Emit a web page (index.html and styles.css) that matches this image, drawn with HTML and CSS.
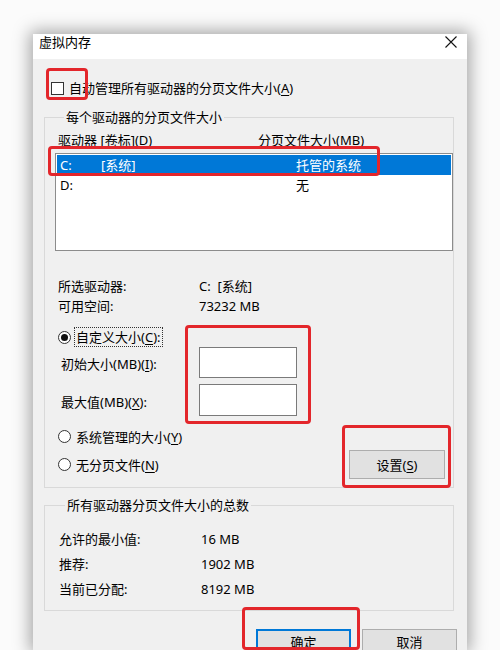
FILE: index.html
```html
<!DOCTYPE html>
<html lang="zh-CN">
<head>
<meta charset="utf-8">
<title>虚拟内存</title>
<link rel="stylesheet" href="styles.css">
</head>
<body>
<div class="dialog">
  <div class="titlebar">
    <span class="title">虚拟内存</span>
    <svg class="close" width="12" height="12" viewBox="0 0 12 12"><path d="M0.5 0.5 L11.5 11.5 M11.5 0.5 L0.5 11.5" stroke="#111" stroke-width="1.1" fill="none"/></svg>
  </div>
  <div class="content">
    <div class="auto"><span class="checkbox"></span><span>自动管理所有驱动器的分页文件大小(<u>A</u>)</span></div>

    <fieldset class="group g1">
      <legend>每个驱动器的分页文件大小</legend>
      <div class="colhead"><span class="ch1">驱动器 [卷标](<u>D</u>)</span><span>分页文件大小(MB)</span></div>
      <div class="listbox">
        <div class="lrow sel"><span class="drv">C:</span><span class="vol">[系统]</span><span>托管的系统</span></div>
        <div class="lrow"><span class="drv">D:</span><span class="vol"></span><span>无</span></div>
      </div>
      <div class="info">
        <span>所选驱动器:</span><span>C:&nbsp; [系统]</span>
        <span>可用空间:</span><span>73232 MB</span>
      </div>
      <div class="opt first"><span class="radio on"></span><span class="focus">自定义大小(<u>C</u>):</span></div>
      <div class="field"><span class="flabel">初始大小(MB)(<u>I</u>):</span><span class="input"></span></div>
      <div class="field f2"><span class="flabel">最大值(MB)(<u>X</u>):</span><span class="input tall"></span></div>
      <div class="opt sys"><span class="radio"></span><span class="olabel">系统管理的大小(<u>Y</u>)</span></div>
      <div class="opt last"><span class="radio"></span><span class="olabel">无分页文件(<u>N</u>)</span><button class="btn set">设置(<u>S</u>)</button></div>
    </fieldset>

    <fieldset class="group g2">
      <legend>所有驱动器分页文件大小的总数</legend>
      <div class="totals">
        <span>允许的最小值:</span><span>16 MB</span>
        <span>推荐:</span><span>1902 MB</span>
        <span>当前已分配:</span><span>8192 MB</span>
      </div>
    </fieldset>

    <div class="actions">
      <button class="btn ok">确定</button>
      <button class="btn">取消</button>
    </div>
  </div>
</div>

<div class="mark m1"></div>
<div class="mark m2"></div>
<div class="mark m3"></div>
<div class="mark m4"></div>
<div class="mark m5"></div>
</body>
</html>
```

FILE: styles.css
```css
html, body {
  margin: 0;
  padding: 0;
}
body {
  width: 500px;
  height: 650px;
  overflow: hidden;
  background: #fbfbfb;
  font-family: "Noto Sans", "Noto Sans CJK SC", sans-serif;
  font-size: 13px;
  color: #000;
}
u {
  text-decoration: underline;
  text-underline-offset: 2px;
}
.dialog {
  margin: 34px 0 0 33px;
  width: 434px;
  height: 616px;
  overflow: hidden;
  background: #f0f0f0;
  box-shadow: 0 0 16px 3px rgba(0, 0, 0, 0.35);
}
.titlebar {
  height: 25px;
  background: #fff;
  display: flex;
  justify-content: space-between;
  align-items: flex-start;
}
.title {
  padding-left: 6px;
  line-height: 17px;
}
.close {
  margin: 2px 10px 0 0;
}
.content {
  padding: 0 0 0 11px;
}
.auto {
  margin-top: 19px;
  height: 20px;
  display: flex;
  align-items: center;
  line-height: 20px;
}
.checkbox {
  width: 13px;
  height: 13px;
  box-sizing: border-box;
  border: 1px solid #333;
  background: #fff;
  margin: 0 5px 0 7px;
}
.group {
  margin: 0;
  border: 1px solid #d9d9d9;
  box-sizing: border-box;
  width: 410px;
  min-width: 0;
}
.group legend {
  margin-left: 6px;
  padding: 0 2px;
  line-height: 18px;
}
.g1 {
  margin-top: 10px;
  padding: 0 8px 8px 13px;
}
.colhead {
  margin-top: 5px;
  line-height: 18px;
  display: flex;
}
.ch1 {
  width: 200px;
}
.listbox {
  margin: 4px 0 0 -3px;
  width: 398px;
  height: 98px;
  box-sizing: border-box;
  border: 1px solid #8c8c8c;
  background: #fff;
  padding: 1px;
}
.lrow {
  height: 20px;
  line-height: 20px;
  display: flex;
  padding-left: 3px;
}
.lrow.sel {
  background: #0078d7;
  color: #fff;
}
.drv {
  width: 41px;
}
.vol {
  width: 195px;
}
.info {
  margin-top: 25px;
  display: grid;
  grid-template-columns: 141px 1fr;
  line-height: 20px;
}
.opt {
  display: flex;
  align-items: center;
  height: 20px;
}
.opt.first {
  margin-top: 11px;
}
.opt.sys {
  margin-top: 10px;
}
.opt.last {
  margin-top: 4px;
  height: 29px;
}
.radio {
  width: 13px;
  height: 13px;
  box-sizing: border-box;
  border: 1px solid #333;
  border-radius: 50%;
  background: #fff;
  display: flex;
  align-items: center;
  justify-content: center;
}
.radio.on::after {
  content: "";
  width: 7px;
  height: 7px;
  border-radius: 50%;
  background: #111;
}
.focus {
  margin-left: 3px;
  padding: 0 1px;
  line-height: 18px;
  border: 1px dotted #333;
}
.olabel {
  margin-left: 5px;
}
.field {
  display: flex;
  align-items: center;
}
.field.f2 {
  margin-top: 6px;
}
.flabel {
  width: 138px;
  padding-left: 3px;
  padding-top: 2px;
}
.input {
  width: 98px;
  height: 31px;
  box-sizing: border-box;
  border: 1px solid #7a7a7a;
  background: #fff;
}
.input.tall {
  height: 32px;
}
.btn {
  font: inherit;
  color: #000;
  background: #e1e1e1;
  border: 1px solid #adadad;
  padding: 0;
  box-sizing: border-box;
}
.set {
  margin-left: auto;
  width: 96px;
  height: 29px;
}
.g2 {
  margin-top: 8px;
  padding: 0 8px 8px 14px;
}
.totals {
  margin-top: 13px;
  display: grid;
  grid-template-columns: 142px 1fr;
  line-height: 25px;
}
.actions {
  margin-top: 18px;
  display: flex;
  justify-content: flex-end;
  gap: 11px;
  padding-right: 10px;
}
.actions .btn {
  width: 95px;
  height: 24px;
}
.actions .ok {
  border: 2px solid #0078d7;
}
.mark {
  position: absolute;
  box-sizing: border-box;
  border: 3px solid #e3262b;
  border-radius: 4px;
}
.m1 { left: 46px; top: 68px; width: 42px; height: 32px; }
.m2 { left: 48px; top: 146px; width: 332px; height: 30px; }
.m3 { left: 185px; top: 325px; width: 126px; height: 99px; }
.m4 { left: 342px; top: 425px; width: 109px; height: 63px; }
.m5 { left: 242px; top: 607px; width: 118px; height: 43px; }
```
